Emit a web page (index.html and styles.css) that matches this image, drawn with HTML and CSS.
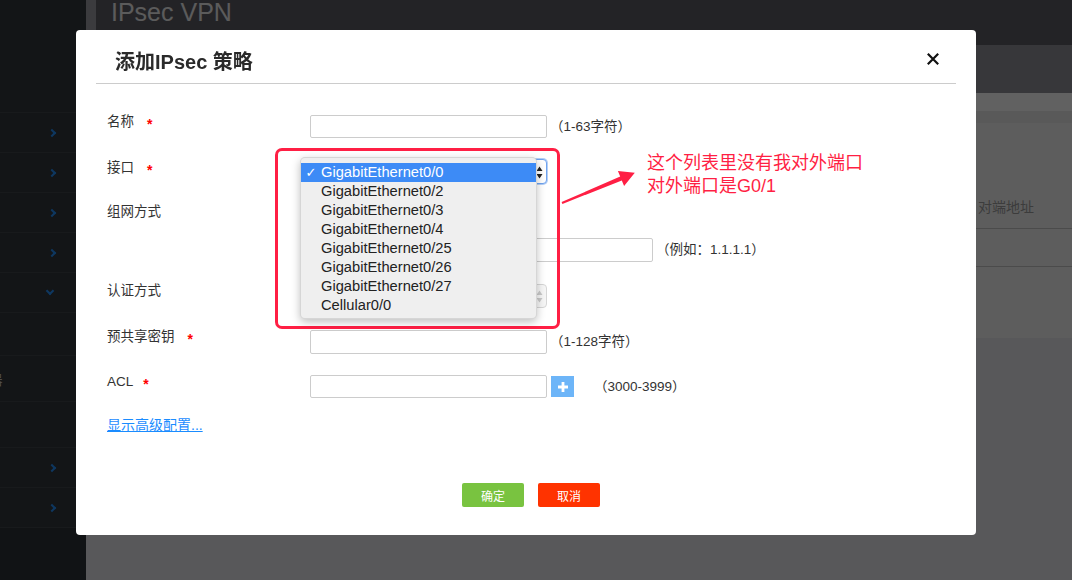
FILE: index.html
```html
<!DOCTYPE html>
<html lang="zh-CN">
<head>
  <meta charset="UTF-8">
  <meta name="viewport" content="width=device-width, initial-scale=1.0">
  <title>IPsec VPN</title>
  <link rel="stylesheet" href="styles.css">
</head>
<body>
  <!-- Página de fondo -->
  <div class="page">
    <div class="sidebar">
      <div class="side-top"></div>
      <div class="side-item"><span class="chev"></span></div>
      <div class="side-item"><span class="chev"></span></div>
      <div class="side-item"><span class="chev"></span></div>
      <div class="side-item"><span class="chev"></span></div>
      <div class="side-item"><span class="chev chev-down"></span></div>
      <div class="side-sub side-sub-first"></div>
      <div class="side-sub"><span class="side-text">服务器</span></div>
      <div class="side-sub"></div>
      <div class="side-item"><span class="chev"></span></div>
      <div class="side-item"><span class="chev"></span></div>
      <div class="side-bottom"></div>
    </div>

    <div class="main">
      <div class="topbar"><h1>IPsec VPN</h1></div>
      <div class="tabs"></div>
      <div class="content">
        <div class="content-top"></div>
        <div class="content-bar"></div>
        <div class="card">
          <div class="toolbar"><button class="btn-refresh">刷新</button></div>
          <div class="table-head">
            <span class="col"></span>
            <span class="col"></span>
            <span class="col"></span>
            <span class="col"></span>
            <span class="col">对端地址</span>
          </div>
          <div class="table-row"></div>
        </div>
      </div>
    </div>
  </div>

  <!-- Capa oscura -->
  <div class="mask"></div>

  <!-- Ventana del diálogo -->
  <div class="modal">
    <div class="modal-header">
      <h2 class="modal-title">添加IPsec 策略</h2>
      <svg class="modal-close" width="12" height="12" viewBox="0 0 12 12">
        <path d="M0.8 0.8L11.2 11.2M11.2 0.8L0.8 11.2" stroke="#111" stroke-width="2.2" fill="none"/>
      </svg>
    </div>

    <form class="modal-body">
      <div class="row row-name">
        <label class="label">名称<span class="star">*</span></label>
        <input class="input" type="text">
        <span class="hint">（1-63字符）</span>
      </div>

      <div class="row row-iface">
        <label class="label label-iface">接口<span class="star">*</span></label>
        <div class="select select-focus">
          <svg class="select-arrows" width="7" height="13" viewBox="0 0 7 13">
            <path d="M0.5 5L3.5 0.5L6.5 5Z M0.5 8L3.5 12.5L6.5 8Z" fill="#222"/>
          </svg>
          <ul class="dropdown">
            <li class="selected"><span class="check">✓</span>GigabitEthernet0/0</li>
            <li><span class="check"></span>GigabitEthernet0/2</li>
            <li><span class="check"></span>GigabitEthernet0/3</li>
            <li><span class="check"></span>GigabitEthernet0/4</li>
            <li><span class="check"></span>GigabitEthernet0/25</li>
            <li><span class="check"></span>GigabitEthernet0/26</li>
            <li><span class="check"></span>GigabitEthernet0/27</li>
            <li><span class="check"></span>Cellular0/0</li>
          </ul>
        </div>
      </div>

      <div class="row row-net">
        <label class="label">组网方式</label>
        <div class="net-group">
          <div class="radios"></div>
          <div class="peer">
            <input class="input input-peer" type="text">
            <span class="hint">（例如：1.1.1.1）</span>
          </div>
        </div>
      </div>

      <div class="row row-auth">
        <label class="label">认证方式</label>
        <div class="select select-disabled">
          <svg class="select-arrows" width="7" height="13" viewBox="0 0 7 13">
            <path d="M0.5 5L3.5 0.5L6.5 5Z M0.5 8L3.5 12.5L6.5 8Z" fill="#c9c9c9"/>
          </svg>
        </div>
      </div>

      <div class="row row-psk">
        <label class="label">预共享密钥<span class="star">*</span></label>
        <input class="input" type="text">
        <span class="hint">（1-128字符）</span>
      </div>

      <div class="row row-acl">
        <label class="label">ACL<span class="star star-acl">*</span></label>
        <input class="input input-acl" type="text">
        <span class="btn-plus">
          <svg width="10" height="10" viewBox="0 0 10 10"><path d="M3.6 0H6.4V3.6H10V6.4H6.4V10H3.6V6.4H0V3.6H3.6Z" fill="#fff"/></svg>
        </span>
        <span class="hint hint-acl">（3000-3999）</span>
      </div>

      <a class="advanced" href="#">显示高级配置...</a>

      <div class="actions">
        <button type="button" class="btn btn-ok">确定</button>
        <button type="button" class="btn btn-cancel">取消</button>
      </div>
    </form>
  </div>

  <!-- Anotación en rojo -->
  <div class="note-box"></div>
  <svg class="note-arrow" width="85" height="50" viewBox="555 160 85 50">
    <polygon points="561.6,202.1 620.2,176.5 617.9,171.1 634.8,172.7 624.1,185.9 621.8,180.5 562.4,203.9" fill="#ff1f44"/>
  </svg>
  <div class="note-text">这个列表里没有我对外端口<br>对外端口是G0/1</div>
</body>
</html>
```

FILE: styles.css
```css
* {
  box-sizing: border-box;
}
html, body {
  margin: 0;
  padding: 0;
  height: 100%;
  overflow: hidden;
}
body {
  font-family: "Liberation Sans", "Noto Sans CJK SC", sans-serif;
  font-size: 14px;
  color: #333;
  background: #e8e8ed;
}

/* Página de fondo */
.page {
  display: flex;
  width: 1110px;
  height: 580px;
}
.sidebar {
  width: 86px;
  flex: none;
  display: flex;
  flex-direction: column;
  background: #32373d;
}
.side-top {
  height: 113px;
  flex: none;
  border-bottom: 1px solid #3f444a;
}
.side-item {
  height: 40px;
  flex: none;
  display: flex;
  align-items: center;
  justify-content: flex-end;
  padding-right: 31px;
  border-bottom: 1px solid #3f444a;
}
.side-sub {
  height: 46px;
  flex: none;
  display: flex;
  align-items: center;
  overflow: hidden;
  border-bottom: 1px solid #3f444a;
}
.side-sub-first {
  height: 43px;
}
.side-text {
  margin-left: -38px;
  font-size: 13.5px;
  color: #d0d0d0;
  white-space: nowrap;
}
.side-bottom {
  flex: 1;
  background: #2d3237;
}
.chev {
  width: 6px;
  height: 6px;
  border-top: 2px solid #2592fd;
  border-right: 2px solid #2592fd;
  transform: rotate(45deg);
}
.chev-down {
  transform: rotate(135deg);
  margin-right: 2px;
  margin-top: -4px;
}

.main {
  flex: 1;
  display: flex;
  flex-direction: column;
}
.topbar {
  height: 45px;
  flex: none;
  background: #5c5c64;
  border-left: 10px solid #9c9ca3;
  padding-left: 15px;
}
.topbar h1 {
  margin: 0;
  font-size: 25px;
  line-height: 25px;
  font-weight: normal;
  color: #efefef;
}
.tabs {
  height: 48px;
  flex: none;
  background: #929099;
}
.content {
  flex: 1;
  background: #e8e8ed;
}
.content-top {
  height: 18px;
  background: #fff;
}
.content-bar {
  height: 12px;
  background: #ebebeb;
}
.card {
  height: 215px;
  padding: 18px 0 0 20px;
  background: #f5f5f5;
}
.toolbar {
  display: flex;
  justify-content: flex-end;
  padding-right: 20px;
}
.btn-refresh {
  width: 50px;
  height: 25px;
  border: none;
  border-radius: 2px;
  background: #00bfe8;
  color: #fff;
  font: inherit;
  font-size: 13px;
}
.table-head {
  display: flex;
  margin-top: 19px;
  height: 44px;
  line-height: 44px;
  border-bottom: 1px solid #c5c5c5;
  color: #9e9e9e;
}
.col {
  width: 218px;
  flex: none;
}
.table-row {
  height: 38px;
  border-bottom: 1px solid #c5c5c5;
}

/* Capa oscura */
.mask {
  position: fixed;
  top: 0;
  left: 0;
  right: 0;
  bottom: 0;
  background: rgba(0, 0, 0, 0.62);
}

/* Diálogo */
.modal {
  position: absolute;
  left: 76px;
  top: 30px;
  width: 900px;
  height: 505px;
  background: #fff;
  border-radius: 4px;
}
.modal-header {
  position: relative;
  margin: 0 20px;
  padding: 20px 19px 9px;
  border-bottom: 1px solid #ccc;
}
.modal-title {
  margin: 0;
  font-size: 20px;
  line-height: 24px;
  font-weight: bold;
  color: #2a2a2a;
}
.modal-close {
  position: absolute;
  right: 17px;
  top: 23px;
}
.modal-body {
  margin: 0;
  padding: 31px 0 0 31px;
}
.row {
  display: flex;
  align-items: flex-start;
  margin-bottom: 21px;
}
.row-name {
  margin-bottom: 20px;
}
.row-net, .row-auth {
  margin-bottom: 22px;
}
.row-acl {
  margin-bottom: 19px;
}
.label {
  display: block;
  width: 203px;
  flex: none;
  font-size: 13.5px;
  line-height: 14px;
  color: #333;
}
.label-iface {
  padding-top: 2px;
}
.star {
  margin-left: 13px;
  color: #f00;
  font-weight: bold;
  font-size: 14px;
  vertical-align: -3px;
}
.star-acl {
  margin-left: 10px;
}
.input {
  width: 237px;
  height: 24px;
  padding: 0 6px;
  border: 1px solid #ccc;
  border-radius: 2px;
  font: inherit;
  background: #fff;
}
.row-name .input, .row-acl .input {
  height: 23px;
}
.input-peer {
  width: 343px;
}
.hint {
  margin-left: 3px;
  font-size: 13.5px;
  line-height: 24px;
  color: #333;
  white-space: nowrap;
}
.hint-acl {
  margin-left: 20px;
}
.btn-plus {
  display: flex;
  align-items: center;
  justify-content: center;
  width: 23px;
  height: 21px;
  margin: 1px 0 0 4px;
  background: #6db5f8;
}

/* Selects */
.select {
  position: relative;
  width: 237px;
  height: 24px;
  border-radius: 4px;
  background: #fff;
}
.select-focus {
  height: 25px;
  border: 1px solid #6fa3ef;
  box-shadow: 0 0 0 1px #b4cff6;
}
.select-disabled {
  border: 1px solid #d6d6d6;
  background: #f6f6f6;
}
.select-arrows {
  position: absolute;
  right: 3px;
  top: 50%;
  margin-top: -6px;
}
.dropdown {
  position: absolute;
  z-index: 5;
  left: -11px;
  top: -3px;
  width: 237px;
  margin: 0;
  padding: 5px 0 3px;
  list-style: none;
  background: #efefef;
  border: 1px solid rgba(0, 0, 0, 0.1);
  border-radius: 5px;
  box-shadow: 0 3px 8px rgba(0, 0, 0, 0.25);
}
.dropdown li {
  display: flex;
  height: 19px;
  line-height: 19px;
  font-size: 14.7px;
  color: #222;
  white-space: nowrap;
}
.dropdown li.selected {
  background: #3d8bf6;
  color: #fff;
}
.check {
  width: 20px;
  flex: none;
  text-align: center;
  font-family: "DejaVu Sans", sans-serif;
  font-size: 13px;
}

.net-group {
  display: flex;
  flex-direction: column;
}
.radios {
  height: 20px;
}
.peer {
  display: flex;
  margin-top: 13px;
}

.advanced {
  display: block;
  width: max-content;
  font-size: 14px;
  line-height: 14px;
  color: #1a8cff;
  text-decoration: underline;
}

.actions {
  display: flex;
  justify-content: center;
  gap: 14px;
  margin-top: 51px;
  padding-left: 10px;
  padding-right: 31px;
}
.btn {
  width: 62px;
  height: 24px;
  border: none;
  border-radius: 2px;
  color: #fff;
  font: inherit;
  font-size: 12px;
}
.btn-ok {
  background: #79c340;
}
.btn-cancel {
  background: #ff3300;
}

/* Anotación */
.note-box {
  position: absolute;
  left: 275px;
  top: 148px;
  width: 285px;
  height: 181px;
  border: 3px solid #ff1f44;
  border-radius: 7px;
}
.note-arrow {
  position: absolute;
  left: 555px;
  top: 160px;
}
.note-text {
  position: absolute;
  left: 647px;
  top: 152px;
  font-size: 18px;
  line-height: 23px;
  color: #ff1f44;
}
```
